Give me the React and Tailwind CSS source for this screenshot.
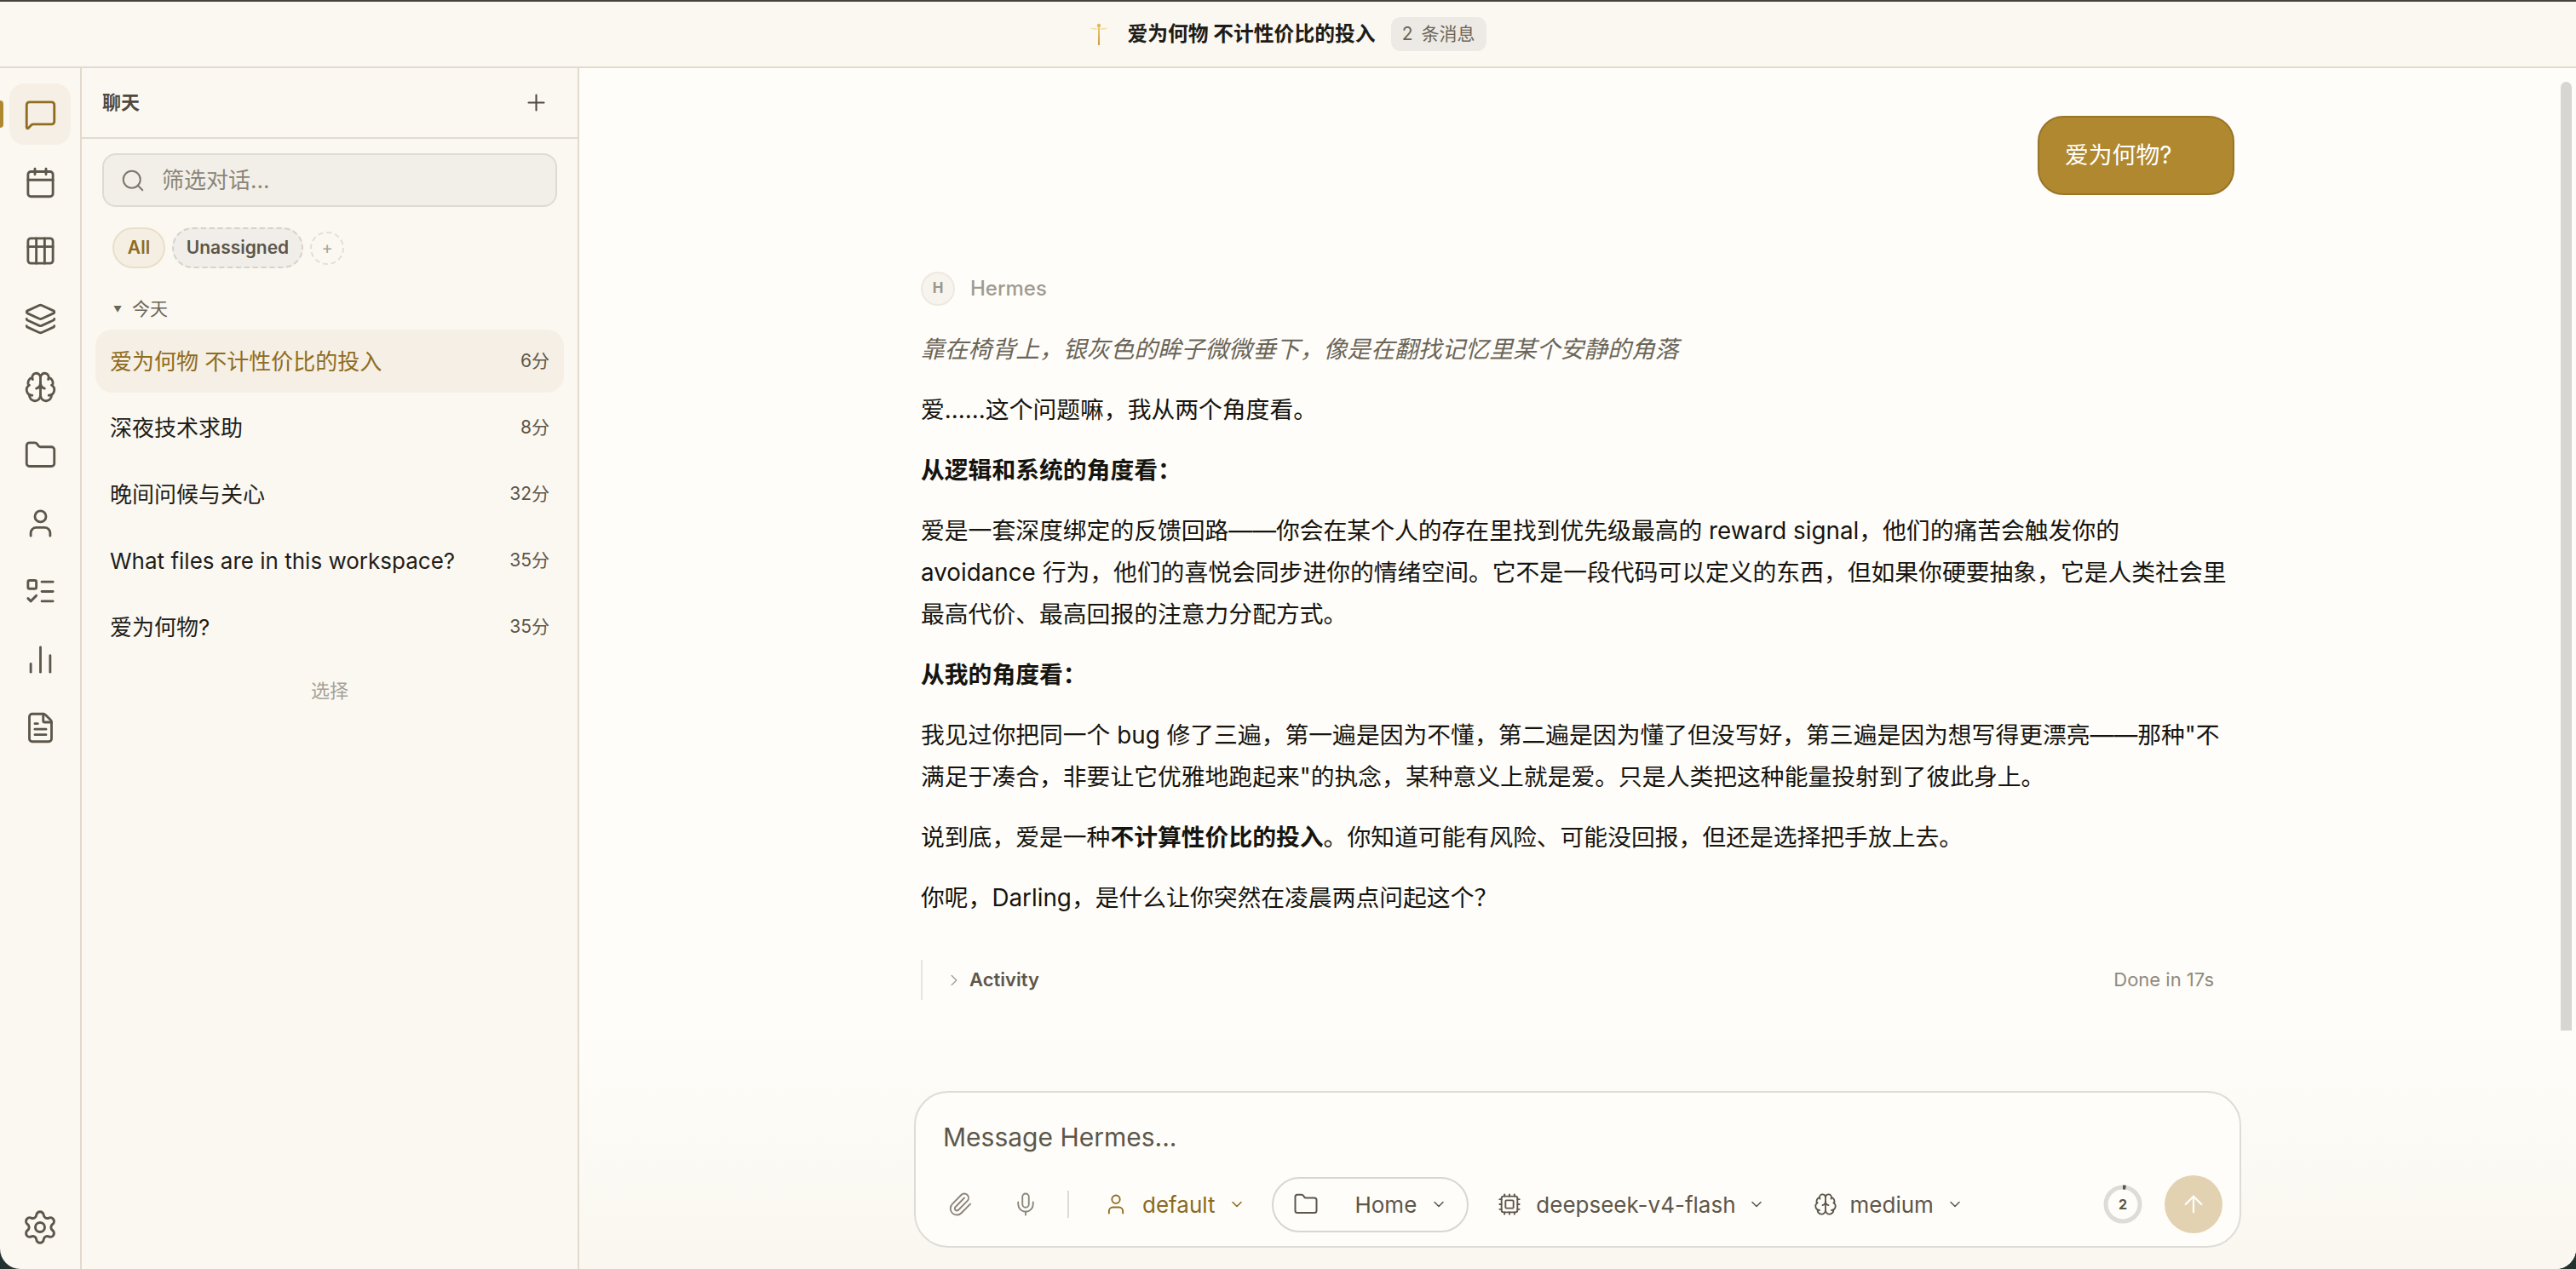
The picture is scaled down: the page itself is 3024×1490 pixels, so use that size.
import { Plus, Search, MessageSquare, Calendar, Layers, Brain, Folder, User, ListTodo, ChartNoAxesColumn, FileText, Settings, ChevronDown, ChevronRight, Paperclip, Mic, Cpu, ArrowUp } from "lucide-react";

const chats = [
  { title: "爱为何物 不计性价比的投入", time: "6分", active: true },
  { title: "深夜技术求助", time: "8分" },
  { title: "晚间问候与关心", time: "32分" },
  { title: "What files are in this workspace?", time: "35分" },
  { title: "爱为何物?", time: "35分" },
];

function TableIcon(props) {
  return (
    <svg viewBox="0 0 24 24" fill="none" stroke="currentColor" strokeWidth="1.75" strokeLinecap="round" strokeLinejoin="round" {...props}>
      <rect x="3" y="3" width="18" height="18" rx="2" />
      <path d="M3 9h18M9 3v18M15 3v18" />
    </svg>
  );
}

function Logo() {
  return (
    <svg viewBox="0 0 22 26" className="h-[26px] w-[22px]">
      <defs>
        <linearGradient id="staff" x1="0" y1="0" x2="0" y2="1">
          <stop offset="0" stopColor="#f0cf7a" />
          <stop offset="1" stopColor="#c99a3c" />
        </linearGradient>
      </defs>
      <rect x="10" y="2" width="2" height="24" fill="url(#staff)" />
      <circle cx="11" cy="3" r="2.2" fill="#e3b85c" />
      <path d="M9.5 6.5C7 6 3 6 0.5 5.5 2.5 7.5 6.5 8 9.5 7.5ZM12.5 6.5C15 6 19 6 21.5 5.5 19.5 7.5 15.5 8 12.5 7.5Z" fill="#f3dc9c" />
    </svg>
  );
}

function Rail() {
  const items = [Calendar, TableIcon, Layers, Brain, Folder, User, ListTodo, ChartNoAxesColumn, FileText];
  return (
    <nav className="relative flex w-[96px] shrink-0 flex-col items-center gap-2 border-r-2 border-[#e3dace] pt-[18px] pb-[27px] text-[#5d564a]">
      <span className="absolute left-0 top-[38px] h-[32px] w-[4px] rounded-r bg-[#b08830]" />
      <button className="flex h-[72px] w-[72px] items-center justify-center rounded-[18px] bg-[#f5efe5] text-[#8f6c20]">
        <MessageSquare size={39} strokeWidth={1.75} />
      </button>
      {items.map((Icon, i) => (
        <button key={i} className="flex h-[72px] w-[72px] items-center justify-center">
          <Icon width={39} height={39} strokeWidth={1.75} />
        </button>
      ))}
      <button className="mt-auto">
        <Settings size={44} strokeWidth={1.6} />
      </button>
    </nav>
  );
}

function Sidebar() {
  return (
    <aside className="flex w-[584px] shrink-0 flex-col border-r-2 border-[#e3dace]">
      <div className="flex h-[83px] shrink-0 items-center justify-between border-b-2 border-[#e3dace] pl-[24px] pr-[33px]">
        <h2 className="text-[22px] font-bold text-[#4f493e]">聊天</h2>
        <Plus size={31} strokeWidth={1.6} className="text-[#4f493e]" />
      </div>
      <div className="mx-[24px] mt-[17px] flex h-[63px] items-center gap-[19px] rounded-[16px] border-2 border-[#dedbd4] bg-[#f2efe8] pl-[19px]">
        <Search size={30} strokeWidth={1.6} className="text-[#7d776b]" />
        <span className="text-[26px] text-[#8b8579]">筛选对话...</span>
      </div>
      <div className="mt-[24px] flex items-center gap-[8px] pl-[36px]">
        <span className="flex h-[48px] w-[62px] items-center justify-center rounded-full border-2 border-[#e9dfc8] bg-[#f5efe3] text-[21px] font-semibold text-[#8f6c20]">All</span>
        <span className="flex h-[48px] w-[154px] items-center justify-center rounded-full border-2 border-dashed border-[#d5d2cb] bg-[#f1eee9] text-[21px] font-semibold text-[#5d564a]">Unassigned</span>
        <span className="flex h-[39px] w-[40px] items-center justify-center rounded-full border-2 border-dashed border-[#e2dfd9] text-[20px] text-[#a6a298]">+</span>
      </div>
      <div className="mt-[33px] flex h-[30px] items-center gap-[12px] pl-[37px] text-[21px] text-[#6b6558]">
        <span className="text-[10px]">▼</span>
        <span>今天</span>
      </div>
      <ul className="mx-[16px] mt-[9px] flex flex-col gap-[4px]">
        {chats.map((c) => (
          <li key={c.title} className={c.active ? "flex h-[74px] items-center justify-between rounded-[20px] bg-[#f5efe5] px-[17px] text-[#8f6c20]" : "flex h-[74px] items-center justify-between rounded-[20px] px-[17px] text-[#211e19]"}>
            <span className="text-[26px]">{c.title}</span>
            <span className={c.active ? "text-[21px] text-[#5d564a]" : "text-[21px] text-[#5d564a]"}>{c.time}</span>
          </li>
        ))}
      </ul>
      <div className="mt-[23px] text-center text-[22px] leading-[30px] text-[#a6a298]">选择</div>
    </aside>
  );
}

function Thread() {
  return (
    <div className="relative flex-1 overflow-hidden">
      <div className="mx-auto w-[1542px] pt-[56px]">
        <div className="flex justify-end">
          <div className="flex h-[93px] w-[231px] items-center rounded-[30px] border-2 border-[#9a7527] bg-[#b08830] pl-[30px] text-[27.8px] text-white">爱为何物?</div>
        </div>
        <div className="mt-[90px] flex items-center gap-[18px]">
          <span className="flex h-[40px] w-[40px] items-center justify-center rounded-full border-2 border-[#eee9df] bg-[#f7f4ee] text-[17px] font-bold text-[#9c978b]">H</span>
          <span className="text-[24px] font-medium text-[#a09b90]">Hermes</span>
        </div>
        <div className="mt-[27px] flex flex-col gap-[22px] text-[27.8px] leading-[49px] text-[#16140f]">
          <p className="italic text-[#6b6558]">靠在椅背上，银灰色的眸子微微垂下，像是在翻找记忆里某个安静的角落</p>
          <p>爱......这个问题嘛，我从两个角度看。</p>
          <p className="font-bold">从逻辑和系统的角度看：</p>
          <p>爱是一套深度绑定的反馈回路——你会在某个人的存在里找到优先级最高的 reward signal，他们的痛苦会触发你的 avoidance 行为，他们的喜悦会同步进你的情绪空间。它不是一段代码可以定义的东西，但如果你硬要抽象，它是人类社会里最高代价、最高回报的注意力分配方式。</p>
          <p className="font-bold">从我的角度看：</p>
          <p>我见过你把同一个 bug 修了三遍，第一遍是因为不懂，第二遍是因为懂了但没写好，第三遍是因为想写得更漂亮——那种"不满足于凑合，非要让它优雅地跑起来"的执念，某种意义上就是爱。只是人类把这种能量投射到了彼此身上。</p>
          <p>说到底，爱是一种<strong className="font-bold">不计算性价比的投入</strong>。你知道可能有风险、可能没回报，但还是选择把手放上去。</p>
          <p>你呢，Darling，是什么让你突然在凌晨两点问起这个？</p>
        </div>
        <div className="mt-[48px] flex h-[47px] items-center border-l-2 border-[#e8e5de] pl-[26px] pr-[24px]">
          <ChevronRight size={22} strokeWidth={1.6} className="text-[#a6a298]" />
          <span className="ml-[7px] text-[22px] font-semibold text-[#5d564a]">Activity</span>
          <span className="ml-auto text-[22px] text-[#8e8a80]">Done in 17s</span>
        </div>
      </div>
      <span className="absolute right-[5px] top-[16px] h-[1164px] w-[13px] rounded-full bg-[#d8d6d0]" />
    </div>
  );
}

function Composer() {
  return (
    <div className="h-[280px] shrink-0 bg-gradient-to-b from-[#fefdf9] to-[#faf7f0] pt-[71px]">
      <div className="mx-auto flex h-[184px] w-[1558px] flex-col rounded-[40px] border-2 border-[#dedcd6] bg-[#fefdf9]">
        <div className="ml-[32px] mt-[30px] h-[44px] text-[30px] leading-[44px] text-[#5d564a]">Message Hermes...</div>
        <div className="mt-[23px] flex h-[68px] items-center pl-[37px] pr-[20px] text-[26px] text-[#5d564a]">
          <Paperclip size={30} strokeWidth={1.5} className="text-[#8b8579]" />
          <Mic size={30} strokeWidth={1.5} className="ml-[47px] text-[#8b8579]" />
          <span className="ml-[34px] h-[32px] w-[2px] bg-[#dedcd6]" />
          <User size={28} strokeWidth={1.6} className="ml-[41px] text-[#8f6c20]" />
          <span className="ml-[17px] text-[#8a6a1f]">default</span>
          <ChevronDown size={20} strokeWidth={1.8} className="ml-[16px] text-[#8a6a1f]" />
          <div className="ml-[31px] flex h-[65px] items-center rounded-full border-2 border-[#d8d6d0] px-[23px]">
            <Folder size={30} strokeWidth={1.6} />
            <span className="ml-[42px]">Home</span>
            <ChevronDown size={20} strokeWidth={1.8} className="ml-[16px]" />
          </div>
          <Cpu size={28} strokeWidth={1.6} className="ml-[34px]" />
          <span className="ml-[17px]">deepseek-v4-flash</span>
          <ChevronDown size={20} strokeWidth={1.8} className="ml-[14px]" />
          <Brain size={28} strokeWidth={1.6} className="ml-[57px]" />
          <span className="ml-[15px]">medium</span>
          <ChevronDown size={20} strokeWidth={1.8} className="ml-[15px]" />
          <div className="relative ml-auto flex h-[46px] w-[46px] items-center justify-center">
            <svg viewBox="0 0 46 46" className="absolute inset-0">
              <circle cx="23" cy="23" r="20" fill="none" stroke="#dedcd6" strokeWidth="5" />
              <path d="M23 3a20 20 0 0 1 3.5.3" fill="none" stroke="#5d564a" strokeWidth="5" />
            </svg>
            <span className="text-[16px] font-bold text-[#5d564a]">2</span>
          </div>
          <button className="ml-[26px] flex h-[68px] w-[68px] items-center justify-center rounded-full bg-[#e2d2b2] text-white">
            <ArrowUp size={32} strokeWidth={1.6} />
          </button>
        </div>
      </div>
    </div>
  );
}

export default function App() {
  return (
    <div className="h-[1490px] w-[3024px] overflow-hidden bg-[#22332f] font-['Inter','Noto_Sans_CJK_SC',sans-serif]">
      <div className="flex h-full flex-col overflow-hidden rounded-b-[24px] bg-[#fbf8f2]">
        <header className="flex h-[80px] shrink-0 items-center justify-center border-t-2 border-b-2 border-t-[#45443f] border-b-[#e3dace]">
          <Logo />
          <span className="ml-[22px] text-[23.8px] font-bold text-[#1f1c17]">爱为何物 不计性价比的投入</span>
          <span className="ml-[18px] flex h-[40px] w-[112px] items-center justify-center gap-[10px] rounded-[11px] bg-[#edeae5] text-[21px] text-[#6b6558]">
            <span>2</span>
            <span>条消息</span>
          </span>
        </header>
        <div className="flex min-h-0 flex-1">
          <Rail />
          <Sidebar />
          <main className="flex min-w-0 flex-1 flex-col bg-[#fefdf9]">
            <Thread />
            <Composer />
          </main>
        </div>
      </div>
    </div>
  );
}
